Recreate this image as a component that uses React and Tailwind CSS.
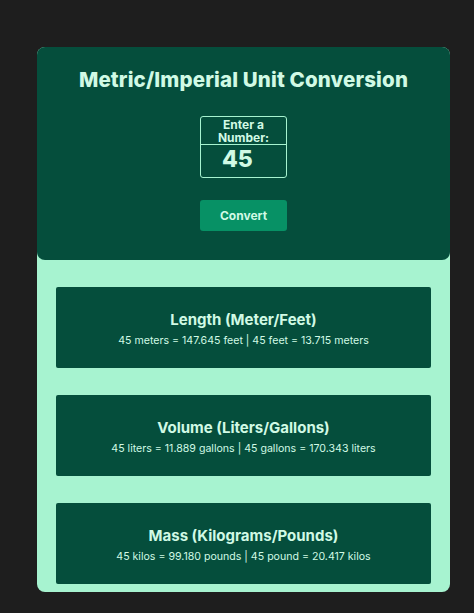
import React, { useState } from "react";

const cards = [
  { title: "Length (Meter/Feet)", text: "45 meters = 147.645 feet | 45 feet = 13.715 meters" },
  { title: "Volume (Liters/Gallons)", text: "45 liters = 11.889 gallons | 45 gallons = 170.343 liters" },
  { title: "Mass (Kilograms/Pounds)", text: "45 kilos = 99.180 pounds | 45 pound = 20.417 kilos" },
];

export default function App() {
  const [val, setVal] = useState("45");
  return (
    <div className="min-h-[613px] w-full bg-[#1e1e1e] pt-[47px] font-['Inter',sans-serif]">
      <div className="ml-[37px] w-[413px] rounded-lg bg-[#a7f3d0] pb-[8px]">
        <div className="flex flex-col items-center rounded-lg bg-[#054e3c] pt-[21px] pb-[29px]">
          <h1 className="text-[20.5px] font-extrabold leading-[24px] tracking-[0.15px] text-[#d1fae5]">Metric/Imperial Unit Conversion</h1>
          <div className="mt-[24px] flex w-[87px] flex-col rounded-[3px] border border-[#a7f3d0]">
            <div className="flex h-[28px] flex-col items-center justify-center border-b border-[#a7f3d0] text-[12px] font-bold text-[#d1fae5]">
              <div className="h-[13px] leading-[13px]">Enter a</div>
              <div className="h-[13px] leading-[13px]">Number:</div>
            </div>
            <input
              value={val}
              onChange={(e) => setVal(e.target.value)}
              className="h-[32px] w-full bg-transparent pb-[4px] pl-[21px] text-[23px] leading-[26px] font-extrabold text-[#d1fae5] outline-none"
            />
          </div>
          <button className="mt-[22px] h-[31px] w-[87px] rounded-[3px] bg-[#079165] text-[12px] font-bold text-[#d1fae5]">
            Convert
          </button>
        </div>
        <div className="flex flex-col px-[19px]">
          {cards.map((c) => (
            <div
              key={c.title}
              className="mt-[27px] flex h-[81px] flex-col items-center rounded-[2px] bg-[#054e3c] pt-[23px] text-[#d1fae5]"
            >
              <div className="text-[15px] font-bold leading-[20px]">{c.title}</div>
              <div className="text-[10.6px] leading-[21px]">{c.text}</div>
            </div>
          ))}
        </div>
      </div>
    </div>
  );
}
